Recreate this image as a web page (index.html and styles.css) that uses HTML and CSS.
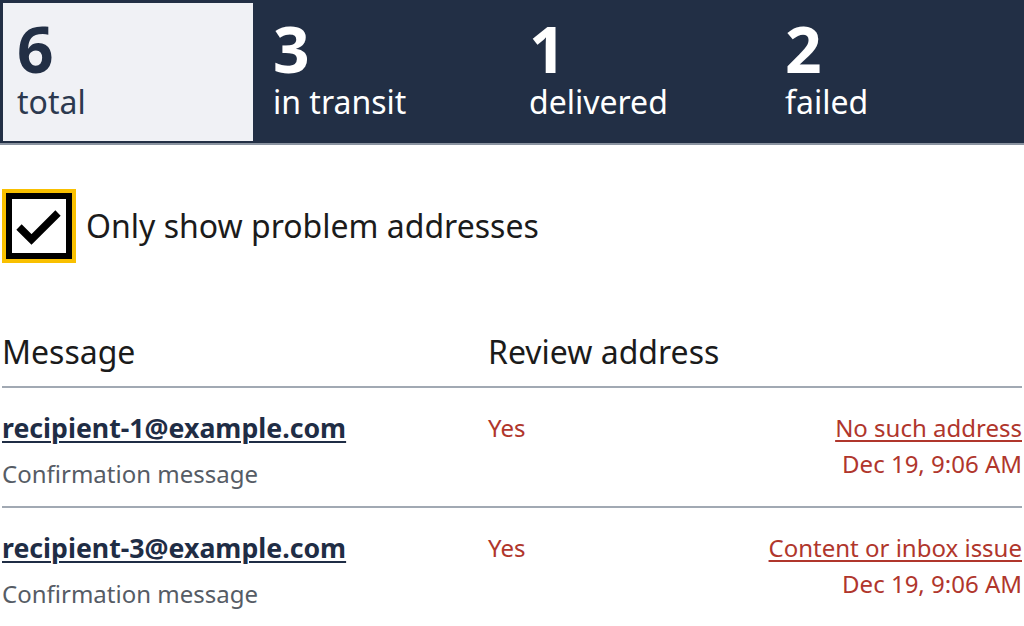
FILE: index.html
```html
<!DOCTYPE html>
<html lang="en">
<head>
    <meta charset="UTF-8">
    <meta name="viewport" content="width=device-width, initial-scale=1.0">
    <title>Message status</title>
    <link rel="stylesheet" href="styles.css">
</head>
<body>

    <nav class="counts">
        <a class="count selected" href="#">
            <span class="count-number">6</span>
            <span class="count-label">total</span>
        </a>
        <a class="count" href="#">
            <span class="count-number">3</span>
            <span class="count-label">in transit</span>
        </a>
        <a class="count" href="#">
            <span class="count-number">1</span>
            <span class="count-label">delivered</span>
        </a>
        <a class="count" href="#">
            <span class="count-number">2</span>
            <span class="count-label">failed</span>
        </a>
    </nav>

    <main class="content">
        <label class="filter">
            <span class="checkbox">
                <svg viewBox="0 0 54 54" width="54" height="54">
                    <polyline points="7,28 19.5,40.5 46,14" fill="none" stroke="#000" stroke-width="7.5"/>
                </svg>
            </span>
            <span>Only show problem addresses</span>
        </label>

        <table class="messages">
            <colgroup>
                <col class="col-message">
                <col class="col-review">
                <col class="col-status">
            </colgroup>
            <thead>
                <tr>
                    <th>Message</th>
                    <th colspan="2">Review address</th>
                </tr>
            </thead>
            <tbody>
                <tr>
                    <td>
                        <a class="recipient" href="#">recipient-1@example.com</a>
                        <div class="hint">Confirmation message</div>
                    </td>
                    <td class="problem">Yes</td>
                    <td class="status">
                        <a href="#">No such address</a><br>
                        Dec 19, 9:06 AM
                    </td>
                </tr>
                <tr>
                    <td>
                        <a class="recipient" href="#">recipient-3@example.com</a>
                        <div class="hint">Confirmation message</div>
                    </td>
                    <td class="problem">Yes</td>
                    <td class="status">
                        <a href="#">Content or inbox issue</a><br>
                        Dec 19, 9:06 AM
                    </td>
                </tr>
            </tbody>
        </table>
    </main>

</body>
</html>
```

FILE: styles.css
```css
body {
    font-family: "Noto Sans", "Open Sans", sans-serif;
    margin: 0;
    color: #1b1b1b;
    background: #fff;
}
.counts {
    display: flex;
    background: #222f45;
    border-bottom: 2px solid #8a93a0;
}
.count {
    flex: 1;
    display: flex;
    flex-direction: column;
    padding: 14px 14px 18px;
    border: 3px solid #222f45;
    border-bottom-width: 2px;
    color: #fff;
    text-decoration: none;
}
.count.selected {
    background: #f0f1f5;
    color: #222f45;
}
.count-number {
    font-size: 64px;
    font-weight: bold;
    line-height: 1;
}
.count-label {
    font-size: 32px;
    line-height: 1.3;
}
.selected .count-label {
    color: #2c394f;
}
.content {
    padding: 0 2px;
}
.filter {
    display: flex;
    align-items: center;
    gap: 14px;
    margin-top: 48px;
    font-size: 32px;
    line-height: 1.5;
    cursor: pointer;
}
.checkbox {
    display: block;
    width: 54px;
    height: 54px;
    margin-left: 4px;
    border: 6px solid #000;
    outline: 4px solid #f9c000;
    background: #fff;
}
.checkbox svg {
    display: block;
}
.messages {
    width: 100%;
    margin-top: 69px;
    border-collapse: collapse;
    table-layout: fixed;
}
.col-message {
    width: 486px;
}
.col-review {
    width: 234px;
}
.messages th {
    font-size: 32px;
    font-weight: normal;
    line-height: 1.5;
    text-align: left;
    padding: 0 0 10px;
    border-bottom: 2px solid #a1a9b3;
}
.messages td {
    font-size: 24px;
    line-height: 1.5;
    vertical-align: top;
    padding: 22px 0 14px;
    border-bottom: 2px solid #a1a9b3;
}
.recipient {
    font-size: 26.7px;
    line-height: 36px;
    font-weight: bold;
    color: #1f2d45;
    text-decoration-thickness: 2px;
    text-underline-offset: 3px;
}
.hint {
    margin-top: 9px;
    color: #565c65;
}
.problem {
    color: #b0362c;
}
.status {
    text-align: right;
    color: #b0362c;
}
.status a {
    color: #b0362c;
    text-underline-offset: 3px;
}
```
